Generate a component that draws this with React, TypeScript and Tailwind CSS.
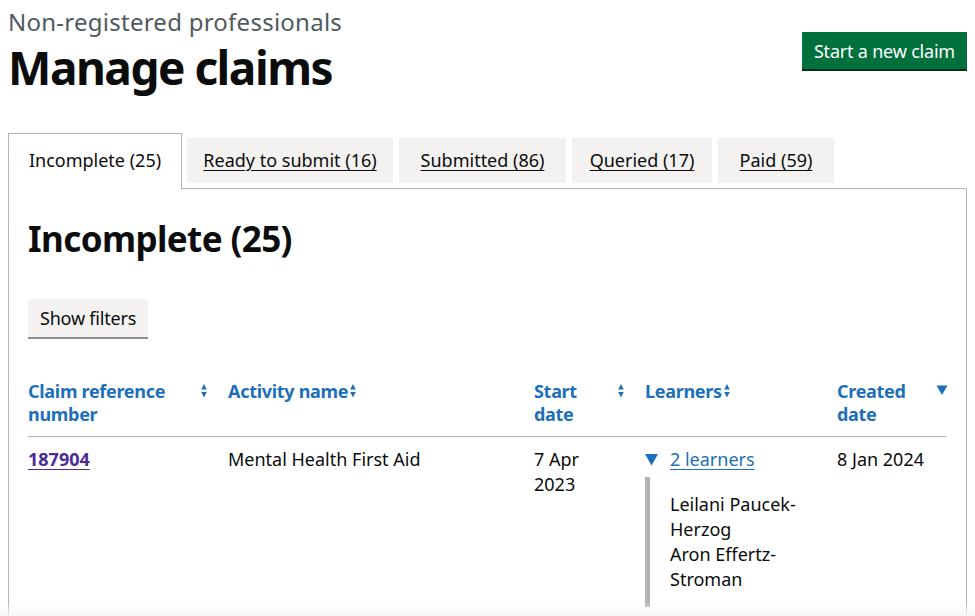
import React from "react";

const SortIcon = () => (
  <svg width="22" height="22" viewBox="0 0 22 22" fill="none" className="shrink-0">
    <path d="M8.1875 9.5L10.9609 3.95703L13.7344 9.5H8.1875Z" fill="currentColor" />
    <path d="M13.7344 12.0781L10.9609 17.6211L8.1875 12.0781H13.7344Z" fill="currentColor" />
  </svg>
);

const DescIcon = () => (
  <svg width="22" height="22" viewBox="0 0 22 22" fill="none" className="shrink-0">
    <path d="M16.5 5.5L11 15L5.5 5.5H16.5Z" fill="currentColor" />
  </svg>
);

export default function App() {
  const tabs = [
    { t: "Ready to submit (16)", w: "w-[206px]" },
    { t: "Submitted (86)", w: "w-[167px]" },
    { t: "Queried (17)", w: "w-[140px]" },
    { t: "Paid (59)", w: "w-[116px]" },
  ];
  return (
    <div className="relative min-h-[616px] overflow-hidden bg-white px-2 text-[#0b0c0c] font-['Noto_Sans',sans-serif]">
      <div className="flex items-start justify-between">
        <div>
          <div className="pt-[7px] text-[24px] leading-[30px] tracking-[0.25px] text-[#505a5f]">Non-registered professionals</div>
          <h1 className="mt-[5px] text-[46px] font-bold leading-[50px] tracking-[-1.5px]">Manage claims</h1>
        </div>
        <button className="mt-[32px] mr-0 bg-[#00703c] px-3 pt-[8px] pb-[7px] text-[18px] leading-[22px] tracking-[-0.2px] text-white shadow-[0_2px_0_#002d18]">
          Start a new claim
        </button>
      </div>

      <div className="mt-[41px]">
        <ul className="flex items-start pt-[5px]">
          <li className="relative z-10 -mt-[5px] -mb-px mr-[5px] w-[174px] border border-b-0 border-[#b1b4b6] bg-white pt-[14px] pb-[16px] text-center text-[18px] leading-[25px]">
            Incomplete (25)
          </li>
          {tabs.map(({ t, w }) => (
            <li key={t} className={`mr-[6px] bg-[#f3f2f1] py-[10px] text-center text-[18px] leading-[25px] ${w}`}>
              <a href="#" className="text-[#0b0c0c] underline underline-offset-[3px] decoration-1">{t}</a>
            </li>
          ))}
        </ul>
        <div className="border border-[#b1b4b6] px-[19px] pt-[30px]">
          <h2 className="text-[35px] font-bold leading-[40px] tracking-[-0.6px]">Incomplete (25)</h2>
          <button className="mt-[40px] bg-[#f3f2f1] px-3 pt-[9px] pb-[8px] text-[18px] leading-[21px] tracking-[-0.2px] shadow-[0_2px_0_#929191]">
            Show filters
          </button>

          <table className="mt-[33px] w-[918px] table-fixed border-collapse text-[18px] leading-[25px]">
            <colgroup>
              <col className="w-[200px]" />
              <col className="w-[306px]" />
              <col className="w-[111px]" />
              <col className="w-[192px]" />
              <col className="w-[109px]" />
            </colgroup>
            <thead>
              <tr className="border-b border-[#b1b4b6] text-left align-top leading-[23px] tracking-[-0.3px]">
                <th className="py-[10px] pr-5 font-bold text-[#1d70b8]">
                  <div className="flex items-start"><span className="flex-1">Claim reference number</span><span className="-mr-[7px]"><SortIcon /></span></div>
                </th>
                <th className="py-[10px] pr-5 font-bold text-[#1d70b8]">
                  <div className="flex items-start"><span className="-mr-[6px]">Activity name</span><SortIcon /></div>
                </th>
                <th className="py-[10px] pr-5 font-bold text-[#1d70b8]">
                  <div className="flex items-start"><span className="flex-1">Start date</span><span className="-mr-[7px]"><SortIcon /></span></div>
                </th>
                <th className="py-[10px] pr-5 font-bold text-[#1d70b8]">
                  <div className="flex items-start"><span className="-mr-[6px]">Learners</span><SortIcon /></div>
                </th>
                <th className="py-[10px] font-bold text-[#1d70b8]">
                  <div className="flex items-start"><span className="flex-1">Created date</span><span className="-mr-[7px]"><DescIcon /></span></div>
                </th>
              </tr>
            </thead>
            <tbody>
              <tr className="align-top">
                <td className="py-[10px] pr-5">
                  <a href="#" className="font-bold text-[#4c2c92] underline underline-offset-[3px] decoration-1">187904</a>
                </td>
                <td className="py-[10px] pr-5">Mental Health First Aid</td>
                <td className="py-[10px] pr-5">
                  <div className="w-[80px]">7 Apr 2023</div>
                </td>
                <td className="py-[10px] pr-5">
                  <div className="flex items-start">
                    <svg width="13" height="12" viewBox="0 0 13 12" className="mt-[7px] mr-[12px] shrink-0">
                      <path d="M0 0H13L6.5 11.5Z" fill="#1d70b8" />
                    </svg>
                    <a href="#" className="text-[#1d70b8] underline underline-offset-[3px] decoration-1">2 learners</a>
                  </div>
                  <div className="mt-[5px] border-l-[5px] border-[#b1b4b6] py-[15px] pl-5">
                    <div>Leilani Paucek-Herzog</div>
                    <div>Aron Effertz-Stroman</div>
                  </div>
                </td>
                <td className="py-[10px]">8 Jan 2024</td>
              </tr>
            </tbody>
          </table>
        </div>
      </div>
      <div className="pointer-events-none absolute inset-x-0 bottom-0 h-[16px] bg-gradient-to-b from-transparent to-[#f7f7f7]"></div>
    </div>
  );
}
